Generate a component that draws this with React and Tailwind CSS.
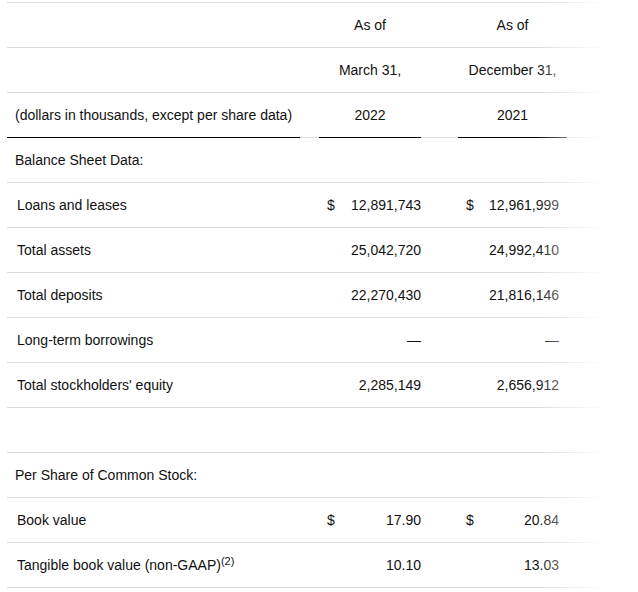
import React from 'react';

const rows = [
  { label: 'Balance Sheet Data:', section: true },
  { label: 'Loans and leases', a: '12,891,743', b: '12,961,999', dollar: true },
  { label: 'Total assets', a: '25,042,720', b: '24,992,410' },
  { label: 'Total deposits', a: '22,270,430', b: '21,816,146' },
  { label: 'Long-term borrowings', a: '\u2014', b: '\u2014' },
  { label: "Total stockholders' equity", a: '2,285,149', b: '2,656,912' },
  { label: '', section: true },
  { label: 'Per Share of Common Stock:', section: true },
  { label: 'Book value', a: '17.90', b: '20.84', dollar: true },
  { label: 'Tangible book value (non-GAAP)', sup: '(2)', a: '10.10', b: '13.03' },
];

const Row = ({ children }) => (
  <div className="flex h-[45px] border-b border-[#dcdcdc] items-center pt-[1px]">{children}</div>
);

const HeaderRow = ({ left, a, b, underline }) => {
  const line = underline ? 'border-b border-black' : 'border-b border-[#dcdcdc]';
  const gray = 'border-b border-[#dcdcdc]';
  return (
    <div className="flex h-[45px]">
      <div className={`w-[293px] pl-2 pt-[1px] flex items-center ${line}`}>{left}</div>
      <div className={`w-[19px] ${gray}`}></div>
      <div className={`w-[102px] pt-[1px] flex items-center justify-center ${line}`}>{a}</div>
      <div className={`w-[37px] ${gray}`}></div>
      <div className={`w-[109px] pt-[1px] flex items-center justify-center ${line}`}>{b}</div>
      <div className={`w-[38px] ${gray}`}></div>
    </div>
  );
};

export default function App() {
  return (
    <div className="bg-white w-[638px] h-[592px] overflow-hidden text-[14px] text-[#111]" style={{ fontFamily: '"Liberation Sans", Arial, sans-serif' }}>
      <div className="relative ml-[7px] mt-[2px] w-[598px] border-t border-[#dcdcdc]">
        <div className="flex h-[45px] border-b border-[#dcdcdc] pt-[1px]">
          <div className="w-[312px]"></div>
          <div className="w-[102px] flex items-center justify-center">As of</div>
          <div className="w-[37px]"></div>
          <div className="w-[109px] flex items-center justify-center">As of</div>
        </div>
        <HeaderRow a="March 31," b="December 31," />
        <HeaderRow left="(dollars in thousands, except per share data)" a="2022" b="2021" underline />
        {rows.map((r, i) => (
          <Row key={i}>
            <div className={`w-[293px] ${r.section ? 'pl-2' : 'pl-[10px]'}`}>
              {r.label}
              {r.sup && <sup className="text-[11px]">{r.sup}</sup>}
            </div>
            <div className="w-[19px]"></div>
            <div className="w-[102px] flex justify-between pl-[8px]">
              <span>{r.dollar ? '$' : ''}</span>
              <span>{r.a}</span>
            </div>
            <div className="w-[37px]"></div>
            <div className="w-[109px] flex justify-between pl-[8px] pr-[8px]">
              <span>{r.dollar ? '$' : ''}</span>
              <span>{r.b}</span>
            </div>
          </Row>
        ))}
        <div className="absolute top-[-2px] bottom-0 left-[528px] w-[70px] bg-linear-to-r from-white/0 to-white"></div>
      </div>
    </div>
  );
}
